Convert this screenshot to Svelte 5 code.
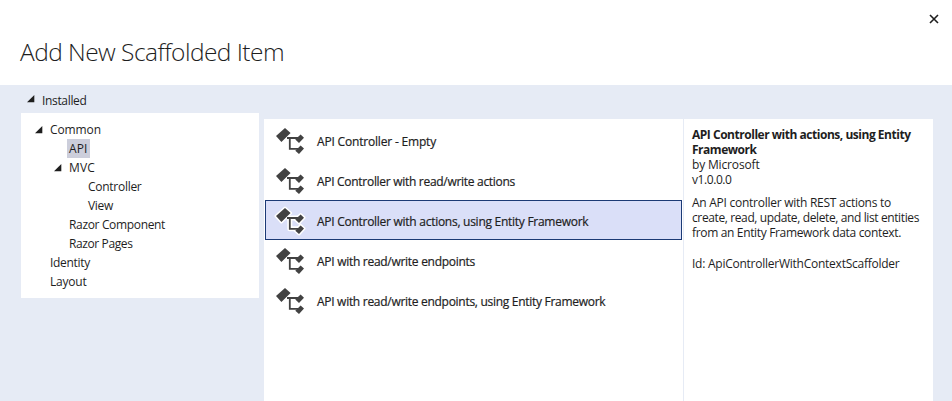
<script>
  const tree = [
    { label: 'Common', indent: 29, width: 51, open: true },
    { label: 'API', indent: 48, width: 18.5, selected: true },
    { label: 'MVC', indent: 48, width: 26, open: true },
    { label: 'Controller', indent: 67, width: 53.5 },
    { label: 'View', indent: 67, width: 25 },
    { label: 'Razor Component', indent: 48, width: 96 },
    { label: 'Razor Pages', indent: 48, width: 63.5 },
    { label: 'Identity', indent: 29, width: 40 },
    { label: 'Layout', indent: 29, width: 36.5 }
  ];
  const items = [
    { label: 'API Controller - Empty', width: 119 },
    { label: 'API Controller with read/write actions', width: 198 },
    { label: 'API Controller with actions, using Entity Framework', width: 271.3 },
    { label: 'API with read/write endpoints', width: 158 },
    { label: 'API with read/write endpoints, using Entity Framework', width: 288.3 }
  ];
  const selectedItem = 2;
  const details = [
    { label: 'API Controller with actions, using Entity', width: 218.5, bold: true },
    { label: 'Framework', width: 64.5, bold: true },
    { label: 'by Microsoft', width: 67.5 },
    { label: 'v1.0.0.0', width: 39.5 },
    { label: 'An API controller with REST actions to', width: 199, gap: 8 },
    { label: 'create, read, update, delete, and list entities', width: 227 },
    { label: 'from an Entity Framework data context.', width: 209 },
    { label: 'Id: ApiControllerWithContextScaffolder', width: 207.5, gap: 16 }
  ];
  const blocks = 'M2 12L11 4L16.6 9L7.4 18ZM26.6 10.5L30 13.7L25 18.9L21.3 15.6ZM26.6 21.4L30 24.6L25 30L21.3 26.7Z';
  const wires = 'M13 14H24M15.8 14V24.8H24';

  // Tracks a label so that it spans the given width.
  function fit(node, width) {
    const natural = node.getBoundingClientRect().width;
    node.style.letterSpacing = `${(width - natural) / node.textContent.length}px`;
  }
</script>

{#snippet arrow()}
  <svg class="arrow" width="8" height="8" viewBox="0 0 8 8"><path d="M7.3 0V7.2H0Z" /></svg>
{/snippet}

<div class="dialog">
  <header>
    <h1><span use:fit={264}>Add New Scaffolded Item</span></h1>
    <button aria-label="Close">
      <svg width="10" height="10" viewBox="0 0 10 10"><path d="M1 1L9 9M9 1L1 9" /></svg>
    </button>
  </header>
  <main>
    <nav>
      <div class="installed">{@render arrow()}<span use:fit={44.5}>Installed</span></div>
      <div class="tree">
        {#each tree as n}
          <div class="node" style:padding-left="{n.indent}px">
            {#if n.open}{@render arrow()}{/if}
            <div class:current={n.selected}><span use:fit={n.width}>{n.label}</span></div>
          </div>
        {/each}
      </div>
    </nav>
    <section class="content">
      <div class="list">
        {#each items as item, i}
          <div class="item" class:selected={i === selectedItem}>
            <svg class="icon" width="32" height="32" viewBox="0 0 32 32">
              <g class="halo">
                <path d={blocks} />
                <path class="line" d={wires} />
              </g>
              <path d={blocks} />
              <path class="wire" d={wires} />
            </svg>
            <span use:fit={item.width}>{item.label}</span>
          </div>
        {/each}
      </div>
      <aside>
        {#each details as d}
          <div class="detail" class:bold={d.bold} style:margin-top="{d.gap ?? 0}px">
            <span use:fit={d.width}>{d.label}</span>
          </div>
        {/each}
      </aside>
    </section>
  </main>
</div>

<style>
  .dialog {
    width: 952px;
    height: 401px;
    display: flex;
    flex-direction: column;
    overflow: hidden;
    background: #fff;
    color: #1e1e1e;
    font: 12px/15px "Open Sans", "Noto Sans", sans-serif;
    white-space: nowrap;
  }
  span { display: inline-block; }
  header {
    height: 85px;
    flex: none;
    display: flex;
    justify-content: space-between;
    align-items: flex-start;
    padding: 0 13px 0 20px;
    box-sizing: border-box;
  }
  h1 {
    margin: 36px 0 0;
    font-size: 24.5px;
    line-height: 32px;
    font-weight: 300;
  }
  button {
    margin: 14px 0 0;
    padding: 0;
    border: 0;
    background: none;
    width: 10px;
    height: 10px;
    display: flex;
  }
  button path { stroke: #1e1e1e; stroke-width: 1.6; fill: none; }
  main {
    flex: 1;
    display: flex;
    gap: 5px;
    padding-left: 21px;
    background: #e6ebf5;
  }
  nav { width: 238px; }
  .installed {
    height: 28px;
    display: flex;
    align-items: center;
    padding: 2px 0 0 21px;
    box-sizing: border-box;
  }
  .arrow { flex: none; fill: #1e1e1e; }
  .installed .arrow { margin: -3px 7px 0 -15px; }
  .tree { height: 185px; padding-top: 7px; box-sizing: border-box; background: #fff; }
  .node { height: 19px; display: flex; align-items: center; }
  .node .arrow { margin: 0 7px 0 -15px; }
  .current { background: #cccedb; padding: 2px; margin-left: -2px; }
  .content {
    width: 669px;
    margin-top: 34px;
    display: flex;
    background: #fff;
  }
  .list { width: 420px; padding: 1px 1px 0; box-sizing: border-box; flex: none; border-right: 1px solid #e6ebf5; }
  .item {
    height: 40px;
    box-sizing: border-box;
    border: 1px solid transparent;
    display: flex;
    align-items: center;
    gap: 11px;
    padding-left: 8px;
    font-weight: 500;
    -webkit-text-stroke: 0.2px #1e1e1e;
  }
  .item span { padding-top: 2px; }
  .icon { fill: #424242; flex: none; }
  .wire, .line { fill: none; stroke: #424242; stroke-width: 1.8; }
  .halo { display: none; }
  .selected { background: #dadff8; border-color: #1b3a75; }
  .selected .halo { display: block; fill: #fff; stroke: #fff; stroke-width: 3; stroke-linejoin: round; }
  .selected .line { fill: none; stroke: #fff; stroke-width: 5; }
  aside { padding: 8px 0 0 8px; }
  .detail { height: 15px; }
  .bold { font-weight: 700; }
</style>
